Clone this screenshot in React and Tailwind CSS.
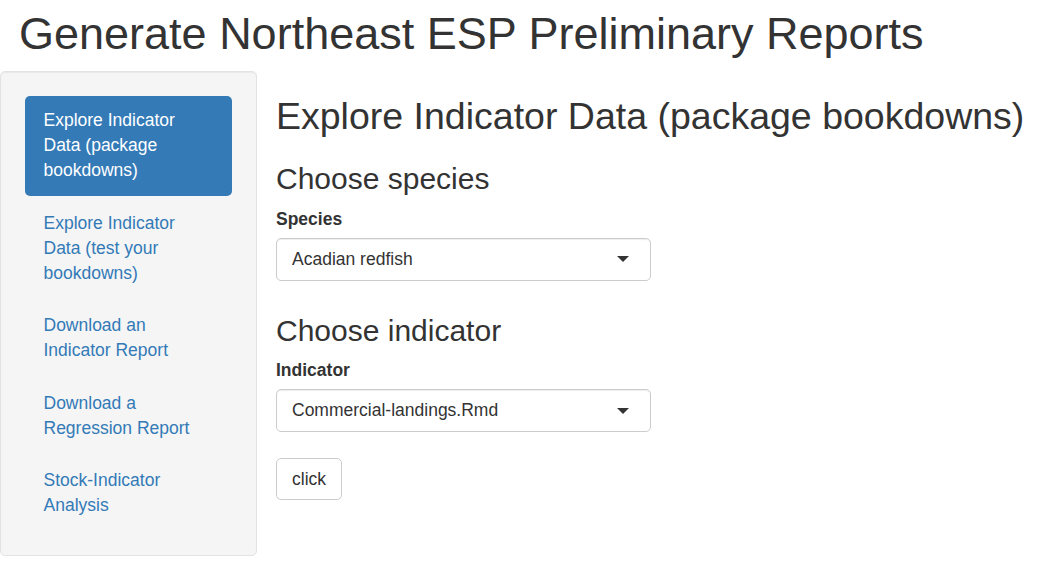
import React from "react";

// Shiny / Bootstrap 3 page, shown at 125% zoom
const NAV = [
  { label: "Explore Indicator Data (package bookdowns)", active: true },
  { label: "Explore Indicator Data (test your bookdowns)" },
  { label: "Download an Indicator Report" },
  { label: "Download a Regression Report" },
  { label: "Stock-Indicator Analysis" },
];

function Select({ value }) {
  return (
    <div className="w-[375px] h-[42.5px] bg-white border border-[#cccccc] rounded-[5px] shadow-[inset_0_1px_1px_rgba(0,0,0,0.075)] pl-[15px] pr-[21px] flex items-center justify-between">
      <span className="text-[#333]">{value}</span>
      <span className="w-0 h-0 border-x-[6.25px] border-t-[6.25px] border-x-transparent border-t-[#333]" />
    </div>
  );
}

export default function App() {
  return (
    <div className="font-['Liberation_Sans',Arial,sans-serif] text-[#333] text-[17.5px] leading-[25px] bg-white min-h-screen">
      <h1 className="pl-[19px] pt-[9px] mb-[12.5px] text-[45px] leading-[49.5px] font-normal">
        Generate Northeast ESP Preliminary Reports
      </h1>

      <div className="flex items-start">
        {/* Sidebar (well) */}
        <aside className="w-[257px] shrink-0 bg-[#f5f5f5] border border-[#e3e3e3] rounded-[5px] shadow-[inset_0_1px_1px_rgba(0,0,0,0.05)] p-[23.75px]">
          <ul className="flex flex-col gap-[2.5px]">
            {NAV.map((n) => (
              <li
                key={n.label}
                className={
                  n.active
                    ? "px-[18.75px] py-[12.5px] rounded-[5px] bg-[#337ab7] text-white"
                    : "px-[18.75px] py-[12.5px] rounded-[5px] text-[#337ab7]"
                }
              >
                {n.label}
              </li>
            ))}
          </ul>
        </aside>

        {/* Main panel */}
        <main className="ml-[19px] pt-[25px]">
          <h2 className="text-[37.5px] leading-[41.25px] font-normal mb-[12.5px]">
            Explore Indicator Data (package bookdowns)
          </h2>

          <h3 className="mt-[25px] mb-[11.5px] text-[30px] leading-[33px] font-normal">Choose species</h3>
          <label className="block font-bold mb-[6.25px]">Species</label>
          <Select value="Acadian redfish" />

          <h3 className="mt-[33px] mb-[11.5px] text-[30px] leading-[33px] font-normal">Choose indicator</h3>
          <label className="block font-bold mb-[6.25px]">Indicator</label>
          <Select value="Commercial-landings.Rmd" />

          <button className="mt-[26px] h-[42.5px] px-[15px] bg-white border border-[#cccccc] rounded-[5px] text-[#333]">
            click
          </button>
        </main>
      </div>
    </div>
  );
}
